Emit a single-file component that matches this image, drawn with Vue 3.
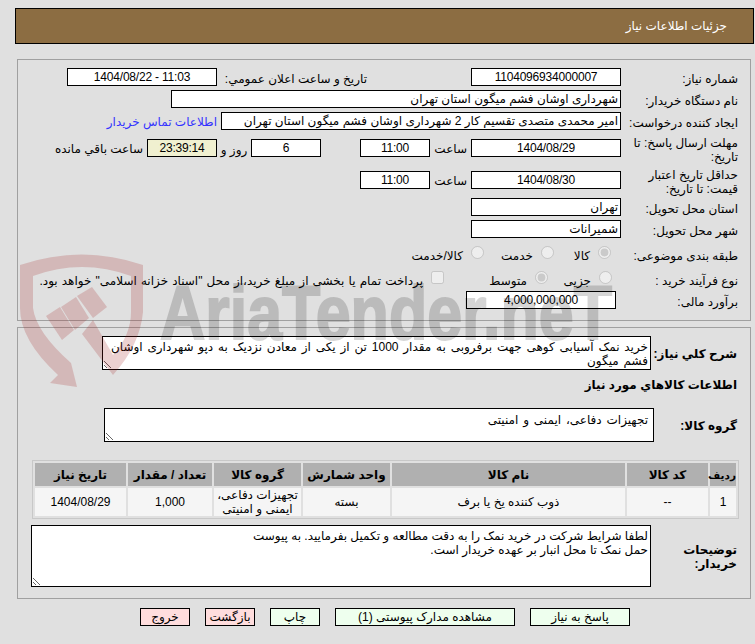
<template>
  <div class="page" dir="rtl">
    <!-- header bar -->
    <div class="header">جزئیات اطلاعات نیاز</div>

    <!-- main info -->
    <div class="box box-info">
      <div class="row">
        <div class="label">شماره نیاز:</div>
        <div class="field center w150">1104096934000007</div>
        <div class="label-pub">تاریخ و ساعت اعلان عمومي:</div>
        <div class="field center w150">11:03 - 1404/08/22</div>
      </div>
      <div class="row">
        <div class="label">نام دستگاه خریدار:</div>
        <div class="field w450">شهرداری اوشان فشم میگون استان تهران</div>
      </div>
      <div class="row">
        <div class="label">ایجاد کننده درخواست:</div>
        <div class="field w400">امیر محمدی متصدی تقسیم کار 2 شهرداری اوشان فشم میگون استان تهران</div>
        <a class="contact" href="#">اطلاعات تماس خریدار</a>
      </div>
      <div class="row mt9">
        <div class="label">مهلت ارسال پاسخ: تا تاریخ:</div>
        <div class="field center w150">1404/08/29</div>
        <div class="unit">ساعت</div>
        <div class="field center w70">11:00</div>
        <div class="field center w70 ms39">6</div>
        <div class="days">روز و</div>
        <div class="field center w70 clock">23:39:14</div>
        <div class="remain">ساعت باقي مانده</div>
      </div>
      <div class="row mt14">
        <div class="label">حداقل تاریخ اعتبار قیمت: تا تاریخ:</div>
        <div class="field center w150">1404/08/30</div>
        <div class="unit">ساعت</div>
        <div class="field center w70">11:00</div>
      </div>
      <div class="row mt9">
        <div class="label">استان محل تحویل:</div>
        <div class="field w150">تهران</div>
      </div>
      <div class="row">
        <div class="label">شهر محل تحویل:</div>
        <div class="field w150">شمیرانات</div>
      </div>
      <div class="row mt7">
        <div class="label">طبقه بندی موضوعی:</div>
        <div class="options first-subject">
          <label class="opt w57"><input type="radio" disabled checked /><span>کالا</span></label>
          <label class="opt w70"><input type="radio" disabled /><span>خدمت</span></label>
          <label class="opt"><input type="radio" disabled /><span>کالا/خدمت</span></label>
        </div>
      </div>
      <div class="row mt7">
        <div class="label">نوع فرآیند خرید :</div>
        <div class="options first-process">
          <label class="opt w64"><input type="radio" disabled /><span>جزیی</span></label>
          <label class="opt w104"><input type="radio" disabled checked /><span>متوسط</span></label>
          <label class="opt"><input type="checkbox" disabled /><span class="wide-text">پرداخت تمام یا بخشی از مبلغ خرید،از محل "اسناد خزانه اسلامی" خواهد بود.</span></label>
        </div>
      </div>
      <div class="row mt3">
        <div class="label">برآورد مالی:</div>
        <div class="field center w150 budget">4,000,000,000</div>
      </div>
    </div>

    <!-- need details -->
    <div class="box box-need">
      <div class="line">
        <div class="label-bold">شرح کلي نیاز:</div>
        <div class="area area-desc">خرید نمک آسیابی کوهی جهت برفروبی به مقدار 1000 تن از یکی از معادن نزدیک به دپو شهرداری اوشان<br />فشم میگون</div>
      </div>
      <div class="goods-title">اطلاعات کالاهاي مورد نیاز</div>
      <div class="line group-line">
        <div class="label-bold">گروه کالا:</div>
        <div class="area area-group">تجهیزات دفاعی، ایمنی و امنیتی</div>
      </div>
      <table class="goods">
        <thead>
          <tr>
            <th v-for="col in columns" :key="col.title" :class="col.cls">{{ col.title }}</th>
          </tr>
        </thead>
        <tbody>
          <tr>
            <td v-for="(cell, i) in goodsRow" :key="i">{{ cell }}</td>
          </tr>
        </tbody>
      </table>
      <div class="line notes-line">
        <div class="label-bold">توضیحات خریدار:</div>
        <div class="area area-notes">لطفا شرایط شرکت در خرید نمک را به دقت مطالعه و تکمیل بفرمایید. به پیوست<br />حمل نمک تا محل انبار بر عهده خریدار است.</div>
      </div>
    </div>

    <!-- actions -->
    <div class="actions">
      <button class="btn green w100">پاسخ به نیاز</button>
      <button class="btn green w180">مشاهده مدارک پیوستی (1)</button>
      <button class="btn green w50">چاپ</button>
      <button class="btn red w50">بازگشت</button>
      <button class="btn red w50">خروج</button>
    </div>

    <!-- watermark -->
    <svg class="watermark" width="755" height="644" viewBox="0 0 755 644">
      <g fill="#a01818" fill-opacity="0.2">
        <path d="M20 265 Q82 244 143 265 L143 312 Q140 345 113 375 L82 334 L93 320 L113 355 Q131 335 131 312 L131 276 Q82 258 33 276 L33 308 Q36 332 71 363 L77 387 L50 383 L58 375 Q20 340 20 308 Z" />
        <path d="M46 316 L60 307 L74 330 L62 340 Z" />
        <path d="M61 307 L76 297 L89 318 L75 330 Z" />
        <path d="M77 296 L92 287 L107 307 L93 318 Z" />
      </g>
      <text class="wm-text" x="160" y="339" font-size="76" textLength="452" lengthAdjust="spacingAndGlyphs">AriaTender.neT</text>
    </svg>
  </div>
</template>

<script setup>
const columns = [
  { title: 'ردیف', cls: 'c-idx' },
  { title: 'کد کالا', cls: 'c-code' },
  { title: 'نام کالا', cls: 'c-name' },
  { title: 'واحد شمارش', cls: 'c-unit' },
  { title: 'گروه کالا', cls: 'c-group' },
  { title: 'تعداد / مقدار', cls: 'c-qty' },
  { title: 'تاریخ نیاز', cls: 'c-date' }
]

const goodsRow = ['1', '--', 'ذوب کننده یخ یا برف', 'بسته', 'تجهیزات دفاعی، ایمنی و امنیتی', '1,000', '1404/08/29']
</script>

<style>
html, body { margin: 0; background: #e0e0e0; overflow: hidden; }
</style>

<style scoped>
.page {
  position: relative; width: 755px; height: 644px; overflow: hidden;
  padding-top: 8px; box-sizing: border-box;
  background: #e0e0e0; color: #000;
  font-family: "Liberation Sans", "DejaVu Sans", sans-serif; font-size: 12px; line-height: 14px;
}
.header {
  height: 36px; margin: 0 1px 15px 15px; padding-right: 26px;
  box-sizing: border-box; border: 1px solid #000;
  background: #8c6d42; color: #fff; font-size: 12px;
  display: flex; align-items: center;
}
.box {
  margin: 0 4px 0 17px; box-sizing: border-box;
  border: 1px solid #a0a0a0; padding-right: 12px;
}
.box-info { height: 262px; padding-top: 8px; margin-bottom: 6px; display: flex; flex-direction: column; }
.box-need { height: 272px; padding-top: 8px; }
.row { display: flex; align-items: center; height: 18px; margin-bottom: 4px; flex: none; }
.mt3 { margin-top: -1px; }
.mt7 { margin-top: 3px; }
.mt9 { margin-top: 5px; }
.mt14 { margin-top: 10px; }
.label { width: 117px; flex: none; padding-top: 3px; box-sizing: border-box; }
.field {
  box-sizing: border-box; height: 18px; border: 1px solid #000; background: #fff;
  padding: 0 2px; white-space: nowrap; overflow: hidden; line-height: 17px; flex: none;
}
.center { text-align: center; letter-spacing: -0.2px; }
.w150 { width: 150px; }
.w450 { width: 450px; }
.w400 { width: 400px; }
.w70 { width: 70px; }
.label-pub { width: 150px; margin-right: 104px; flex: none; padding-top: 3px; box-sizing: border-box; }
.contact { margin-right: 4px; padding-top: 2px; color: #3333ff; text-decoration: none; white-space: nowrap; }
.unit { width: 37px; margin-right: 4px; flex: none; padding-top: 2px; }
.ms39 { margin-right: 39px; }
.days { width: 34px; text-align: center; flex: none; padding-top: 3px; }
.clock { background: #f0f0d0; }
.remain { margin-right: 4px; white-space: nowrap; padding-top: 2px; }
.options { display: flex; align-items: center; }
.first-subject { margin-right: 10px; }
.first-process { margin-right: 9px; }
.opt { display: flex; align-items: center; gap: 8px; flex: none; white-space: nowrap; }
.opt input { margin: -4px 0 0; width: 13px; height: 13px; }
.opt span { padding-top: 3px; }
.opt .wide-text { word-spacing: 0.8px; }
.w57 { width: 57px; }
.w64 { width: 64px; }
.w104 { width: 104px; }
.budget { margin-right: 5px; }

.line { display: flex; align-items: center; }
.label-bold { width: 86px; flex: none; font-weight: bold; margin-right: 1px; padding-top: 1px; }
.area {
  box-sizing: border-box; border: 1px solid #000; background: #fff;
  padding: 3px 2px; overflow: hidden; resize: both;
}
.area-desc { width: 549px; height: 34px; word-spacing: 1.5px; white-space: nowrap; }
.goods-title { font-weight: bold; margin: 8px 1px 0 0; height: 14px; }
.group-line { margin-top: 16px; }
.area-group { width: 550px; height: 34px; margin-right: -3px; padding: 4px 5px; word-spacing: 1.5px; }
.goods {
  width: 707px; margin: 18px -1px 0 0; table-layout: fixed;
  border: 1px solid #c8c8c8; border-spacing: 2px; border-collapse: separate;
}
.goods th, .goods td { padding: 0; text-align: center; font-size: 12px; }
.goods th { background: #b0b0b0; height: 23px; font-weight: bold; }
.goods th.c-idx { font-size: 10.5px; }
.goods td { background: #f5f5f5; height: 28px; }
.c-idx { width: 26px; }
.c-code { width: 81px; }
.c-name { width: 233px; }
.c-unit { width: 87px; }
.c-group { width: 87px; }
.c-qty { width: 84px; }
.c-date { width: 91px; }
.notes-line { margin-top: 6px; }
.area-notes { width: 620px; height: 62px; }

.actions { display: flex; gap: 15px; margin: 9px 125px 0 0; }
.btn {
  height: 18px; padding: 0; border: 1px solid #000; box-sizing: border-box;
  font: inherit; line-height: 14px; color: #000;
}
.green { background: #eeffee; }
.red { background: #ffdddd; }
.w100 { width: 100px; }
.w180 { width: 180px; }
.w50 { width: 50px; }

.watermark { position: absolute; left: 0; top: 0; pointer-events: none; direction: ltr; }
.wm-text {
  font-family: "Liberation Sans", sans-serif; font-weight: bold;
  fill: #000; stroke: #000; stroke-width: 2px; opacity: 0.16;
}
</style>
